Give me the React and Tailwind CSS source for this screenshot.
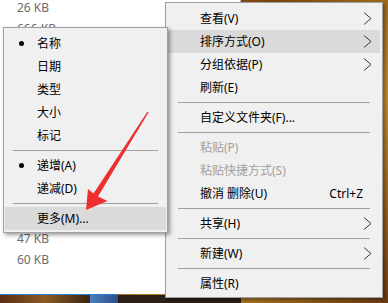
import React from 'react';

const font = { fontFamily: '"Segoe UI", "Noto Sans", "Noto Sans CJK SC", sans-serif' };

const mainItems = [
  { label: '查看(V)', sub: true },
  { label: '排序方式(O)', sub: true, active: true },
  { label: '分组依据(P)', sub: true },
  { label: '刷新(E)' },
  { sep: true },
  { label: '自定义文件夹(F)...' },
  { sep: true },
  { label: '粘贴(P)', disabled: true },
  { label: '粘贴快捷方式(S)', disabled: true },
  { label: '撤消 删除(U)', shortcut: 'Ctrl+Z' },
  { sep: true },
  { label: '共享(H)', sub: true },
  { sep: true },
  { label: '新建(W)', sub: true },
  { sep: true },
  { label: '属性(R)' },
];

const sortItems = [
  { label: '名称', checked: true },
  { label: '日期' },
  { label: '类型' },
  { label: '大小' },
  { label: '标记' },
  { sep: true },
  { label: '递增(A)', checked: true },
  { label: '递减(D)' },
  { sep: true },
  { label: '更多(M)...', active: true },
];

const sizes = ['26 KB', '666 KB', '', '', '', '', '', '', '', '', '', '47 KB', '60 KB'];

function Chevron() {
  return (
    <svg width="9" height="13" viewBox="0 0 9 13" className="shrink-0">
      <polyline points="1,0.5 8,6.5 1,12.5" fill="none" stroke="#3a3a3a" strokeWidth="1" />
    </svg>
  );
}

function MenuRow({ item }) {
  if (item.sep) {
    return <div className="h-px bg-[#a0a0a0] my-[3px] mx-[10px]" />;
  }
  return (
    <div
      className={`h-[23px] flex items-center pl-[32px] pr-[8px] ${item.active ? 'bg-[#dadada]' : ''} ${
        item.disabled ? 'text-[#a0a0a0]' : 'text-black'
      }`}
    >
      <span className="flex-1 whitespace-nowrap">{item.label}</span>
      {item.shortcut && <span className="mr-[9px]">{item.shortcut}</span>}
      {item.sub && <Chevron />}
    </div>
  );
}

function SubRow({ item }) {
  if (item.sep) {
    return <div className="h-px bg-[#a0a0a0] my-[3px] mx-[8px]" />;
  }
  return (
    <div className={`relative h-[23px] flex items-center pl-[32px] text-black ${item.active ? 'bg-[#dadada]' : ''}`}>
      {item.checked && <span className="absolute left-[14px] top-[9px] w-[5px] h-[5px] rounded-full bg-black" />}
      <span className="whitespace-nowrap">{item.label}</span>
    </div>
  );
}

export default function App() {
  return (
    <div
      className="relative w-[388px] h-[303px] overflow-hidden bg-[linear-gradient(135deg,#b9761e,#7a4510_40%,#c08a2a_70%,#6b3a12)] text-[12px]"
      style={font}
    >
      {/* explorer window */}
      <div className="absolute left-0 top-0 w-[241px] h-[294px] bg-white border-r border-[#b8b8b8] overflow-hidden">
        <div className="-mt-[3px] flex flex-col">
          {sizes.map((s, i) => (
            <div key={i} className="h-[21px] flex items-center pl-[17px] text-[#6d6d6d]">
              {s}
            </div>
          ))}
        </div>
      </div>

      {/* desktop strip below */}
      <div className="absolute left-0 top-[294px] w-[241px] h-[9px] flex flex-col">
        <div className="h-px w-[118px] bg-[#2a7fd8]" />
        <div className="flex-1 flex">
          <div className="w-[90px] bg-[linear-gradient(90deg,#5a2e12,#8a5a22,#3a2412)]" />
          <div className="w-[28px] bg-[linear-gradient(90deg,#4a7fbf,#2c4f8a)]" />
          <div className="flex-1 bg-[#2a1e16]" />
        </div>
      </div>

      {/* main context menu */}
      <div className="absolute left-[165px] top-[2px] w-[218px] bg-[#f0f0f0] border border-[#a0a0a0] px-[2px] pt-[4px] pb-[2px] shadow-[2px_2px_3px_rgba(0,0,0,0.35)]">
        {mainItems.map((it, i) => (
          <MenuRow key={i} item={it} />
        ))}
      </div>

      {/* sort submenu */}
      <div className="absolute left-[3px] top-[27px] w-[165px] bg-[#f0f0f0] border border-[#a0a0a0] px-[1px] pt-[4px] pb-[2px] shadow-[2px_2px_4px_rgba(0,0,0,0.4)]">
        {sortItems.map((it, i) => (
          <SubRow key={i} item={it} />
        ))}
      </div>

      {/* red arrow */}
      <svg className="absolute left-0 top-0 pointer-events-none" width="388" height="303">
        <polygon
          points="86,210 88,189 93.5,193.5 147.6,111.5 148.6,112.3 98,196.5 107.5,201"
          fill="#ee2f2f"
        />
      </svg>
    </div>
  );
}
